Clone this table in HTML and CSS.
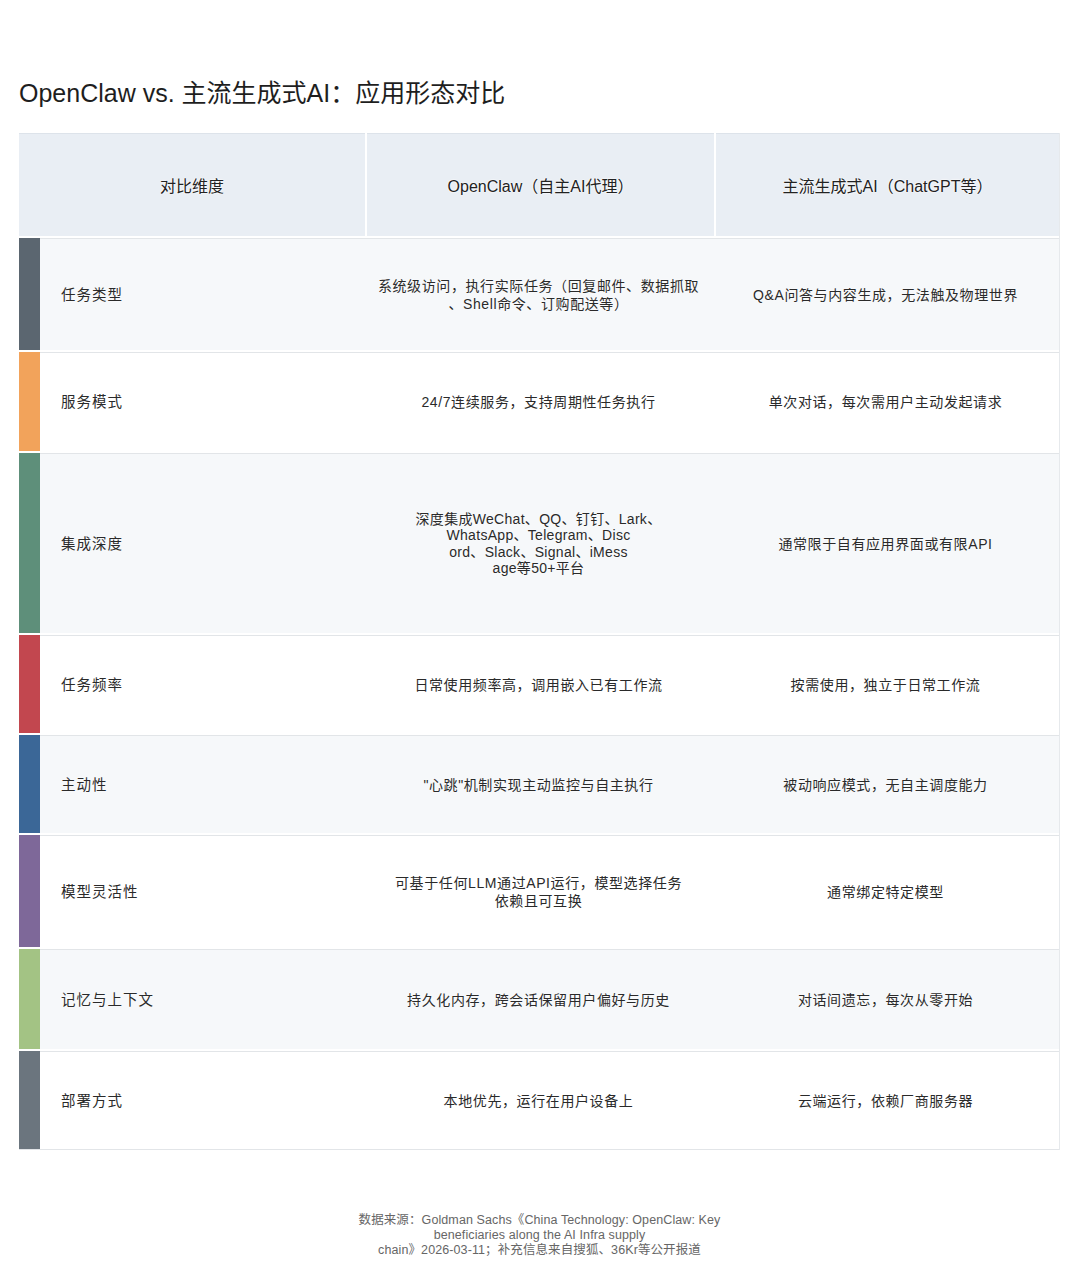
FILE: index.html
```html
<!DOCTYPE html>
<html lang="zh">
<head>
<meta charset="utf-8">
<title>OpenClaw vs. 主流生成式AI</title>
<link rel="stylesheet" href="styles.css">
</head>
<body>
<div class="page">
  <h1 class="title">OpenClaw vs. 主流生成式AI：应用形态对比</h1>
  <div class="table">
    <div class="head">
      <div class="hcell">对比维度</div>
      <div class="hcell">OpenClaw（自主AI代理）</div>
      <div class="hcell">主流生成式AI（ChatGPT等）</div>
    </div>
    <div class="row alt h112">
      <div class="bar c1"></div>
      <div class="cell dim">任务类型</div>
      <div class="cell">系统级访问，执行实际任务（回复邮件、数据抓取<br>、Shell命令、订购配送等）</div>
      <div class="cell">Q&amp;A问答与内容生成，无法触及物理世界</div>
    </div>
    <div class="row h99">
      <div class="bar c2"></div>
      <div class="cell dim">服务模式</div>
      <div class="cell">24/7连续服务，支持周期性任务执行</div>
      <div class="cell">单次对话，每次需用户主动发起请求</div>
    </div>
    <div class="row alt h180">
      <div class="bar c3"></div>
      <div class="cell dim">集成深度</div>
      <div class="cell tight">深度集成WeChat、QQ、钉钉、Lark、<br>WhatsApp、Telegram、Disc<br>ord、Slack、Signal、iMess<br>age等50+平台</div>
      <div class="cell">通常限于自有应用界面或有限API</div>
    </div>
    <div class="row h98">
      <div class="bar c4"></div>
      <div class="cell dim">任务频率</div>
      <div class="cell">日常使用频率高，调用嵌入已有工作流</div>
      <div class="cell">按需使用，独立于日常工作流</div>
    </div>
    <div class="row alt h98">
      <div class="bar c5"></div>
      <div class="cell dim">主动性</div>
      <div class="cell">"心跳"机制实现主动监控与自主执行</div>
      <div class="cell">被动响应模式，无自主调度能力</div>
    </div>
    <div class="row h112">
      <div class="bar c6"></div>
      <div class="cell dim">模型灵活性</div>
      <div class="cell narrow">可基于任何LLM通过API运行，模型选择任务<br>依赖且可互换</div>
      <div class="cell">通常绑定特定模型</div>
    </div>
    <div class="row alt h100">
      <div class="bar c7"></div>
      <div class="cell dim">记忆与上下文</div>
      <div class="cell">持久化内存，跨会话保留用户偏好与历史</div>
      <div class="cell">对话间遗忘，每次从零开始</div>
    </div>
    <div class="row h99">
      <div class="bar c8"></div>
      <div class="cell dim">部署方式</div>
      <div class="cell">本地优先，运行在用户设备上</div>
      <div class="cell">云端运行，依赖厂商服务器</div>
    </div>
  </div>
  <p class="source">数据来源：Goldman Sachs《China Technology: OpenClaw: Key<br>beneficiaries along the AI Infra supply<br>chain》2026-03-11；补充信息来自搜狐、36Kr等公开报道</p>
</div>
</body>
</html>
```

FILE: styles.css
```css
* { box-sizing: border-box; }
html, body {
  margin: 0;
  padding: 0;
  background: #ffffff;
}
body {
  font-family: "Liberation Sans", "Noto Sans CJK SC", sans-serif;
  color: #2b2b2b;
}
.page {
  width: 1080px;
  padding: 76px 20px 0 19px;
}
.title {
  margin: 0;
  font-size: 25px;
  font-weight: normal;
  line-height: 34px;
  color: #1e1e1e;
  letter-spacing: 0;
}
.table {
  margin-top: 23px;
  display: flex;
  flex-direction: column;
  gap: 2px;
  border-right: 1px solid #e6e9ec;
}
.head {
  display: grid;
  grid-template-columns: 346px 347px 1fr;
  gap: 2px;
  height: 103px;
}
.hcell {
  background: #e9eef4;
  border-top: 1px solid #dde3ea;
  display: flex;
  align-items: center;
  justify-content: center;
  font-size: 16px;
  color: #222;
  text-shadow: 0 0 2px #fff, 0 0 2px #fff;
}
.row {
  display: grid;
  grid-template-columns: 21px 325px 347px 1fr;
  background: #ffffff;
  border-top: 1px solid #e2e5e8;
}
.row.alt { background: #f6f8fa; }
.row:last-child { border-bottom: 1px solid #e2e5e8; }
.h112 { height: 112px; }
.h99 { height: 99px; }
.h98 { height: 98px; }
.h100 { height: 100px; }
.h180 { height: 180px; }
.bar { margin-top: -1px; }
.c1 { background: #5b6670; }
.c2 { background: #f2a35b; }
.c3 { background: #5e8f7a; }
.c4 { background: #c2474f; }
.c5 { background: #3b6797; }
.c6 { background: #7e6899; }
.c7 { background: #a3c384; }
.c8 { background: #6b757e; }
.cell {
  display: flex;
  align-items: center;
  justify-content: center;
  text-align: center;
  font-size: 14px;
  line-height: 18px;
  letter-spacing: 0.6px;
  color: #2a2a2a;
  text-shadow: 0 0 2px #fff;
}
.cell.dim {
  justify-content: flex-start;
  text-align: left;
  padding-left: 21px;
  font-size: 14.5px;
  letter-spacing: 1px;
}
.cell.tight {
  line-height: 16.5px;
  letter-spacing: 0.3px;
}
.source {
  margin: 63px 0 0 0;
  text-align: center;
  font-size: 12.5px;
  line-height: 15px;
  letter-spacing: 0.1px;
  color: #666;
}
```
